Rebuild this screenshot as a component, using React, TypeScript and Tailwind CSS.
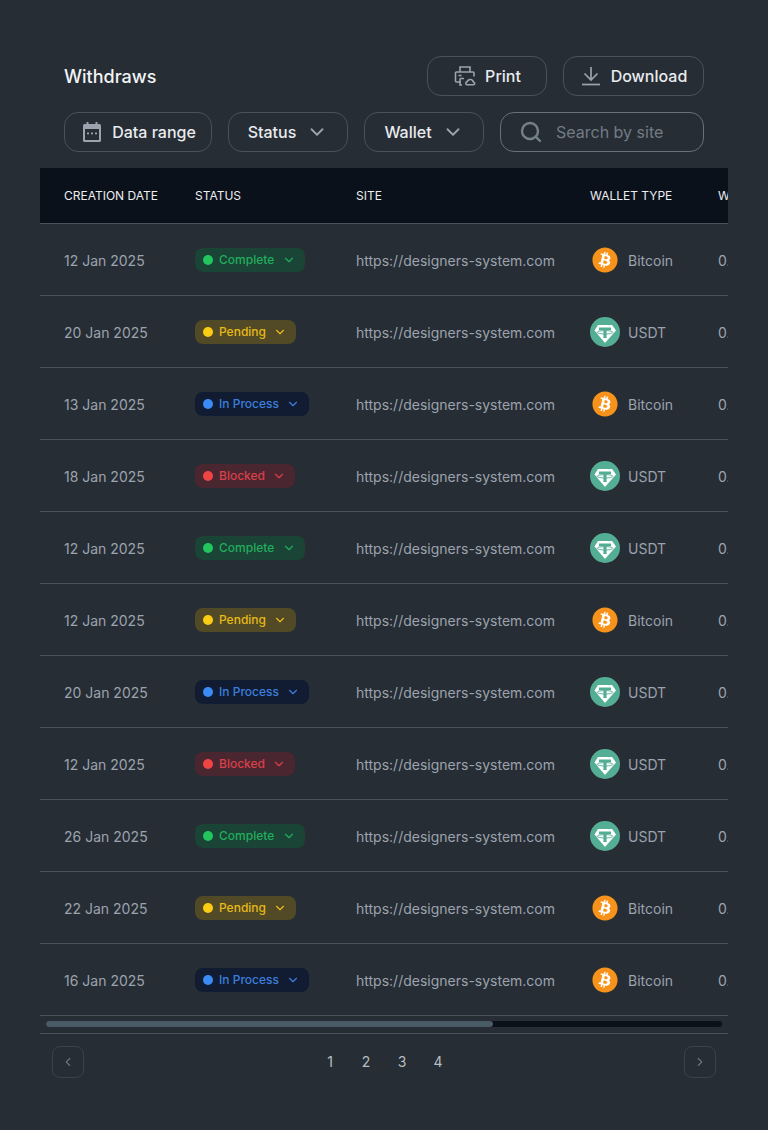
import { ChevronDown, ChevronLeft, ChevronRight, Search } from "lucide-react";
import { FaBitcoin } from "react-icons/fa";

type Status = "Complete" | "Pending" | "In Process" | "Blocked";
type Wallet = "Bitcoin" | "USDT";

const rows: { date: string; status: Status; wallet: Wallet }[] = [
  { date: "12 Jan 2025", status: "Complete", wallet: "Bitcoin" },
  { date: "20 Jan 2025", status: "Pending", wallet: "USDT" },
  { date: "13 Jan 2025", status: "In Process", wallet: "Bitcoin" },
  { date: "18 Jan 2025", status: "Blocked", wallet: "USDT" },
  { date: "12 Jan 2025", status: "Complete", wallet: "USDT" },
  { date: "12 Jan 2025", status: "Pending", wallet: "Bitcoin" },
  { date: "20 Jan 2025", status: "In Process", wallet: "USDT" },
  { date: "12 Jan 2025", status: "Blocked", wallet: "USDT" },
  { date: "26 Jan 2025", status: "Complete", wallet: "USDT" },
  { date: "22 Jan 2025", status: "Pending", wallet: "Bitcoin" },
  { date: "16 Jan 2025", status: "In Process", wallet: "Bitcoin" },
];

const statusStyles: Record<Status, { pill: string; dot: string; text: string }> = {
  Complete: { pill: "bg-[#1a4436] w-[110px]", dot: "bg-[#22c55e]", text: "text-[#22ad5c]" },
  Pending: { pill: "bg-[#524926] w-[101px]", dot: "bg-[#facc15]", text: "text-[#e6bb18]" },
  "In Process": { pill: "bg-[#111c33] w-[114px]", dot: "bg-[#3b8bf6]", text: "text-[#3b7fdc]" },
  Blocked: { pill: "bg-[#4a2630] w-[100px]", dot: "bg-[#ef4444]", text: "text-[#d8404a]" },
};

function CalendarIcon() {
  return (
    <svg width="20" height="22" viewBox="0 0 20 22" fill="none">
      <rect x="1" y="3" width="18" height="18" rx="1.500" fill="#9ca3af" />
      <rect x="3" y="8" width="14" height="11" fill="#262d34" />
      <rect x="4.500" y="1" width="2" height="3" fill="#9ca3af" />
      <rect x="13.500" y="1" width="2" height="3" fill="#9ca3af" />
      <rect x="5" y="11.500" width="2" height="1.800" fill="#9ca3af" />
      <rect x="9" y="11.500" width="2" height="1.800" fill="#9ca3af" />
      <rect x="13" y="11.500" width="2" height="1.800" fill="#9ca3af" />
    </svg>
  );
}

function PrintCloudIcon() {
  return (
    <svg width="22" height="22" viewBox="0 0 22 22" fill="none" stroke="#9ca3af" strokeWidth="1.600">
      <path d="M6 7V2h10v5" />
      <path d="M7 17H2.500a1 1 0 0 1-1-1V8a1 1 0 0 1 1-1h16.500a1 1 0 0 1 1 1v3.500" />
      <path d="M4.500 10.500h3" />
      <path d="M6 13.500h4M6 13.500V20h2" />
      <path d="M12.800 19.800h6.400a1.400 1.400 0 0 0 .2-2.800 3.200 3.200 0 0 0-6.200-.3 1.600 1.600 0 0 0-.4 3.100z" />
    </svg>
  );
}

function DownloadIcon() {
  return (
    <svg width="20" height="20" viewBox="0 0 20 20" fill="none" stroke="#9ca3af" strokeWidth="1.700">
      <path d="M10 1v12.500" />
      <path d="M3.500 7.500 10 14l6.500-6.500" />
      <path d="M1 18.500h18" />
    </svg>
  );
}

function BitcoinIcon() {
  return (
    <div className="relative h-[26px] w-[26px]">
      <div className="absolute inset-1 rounded-full bg-white" />
      <FaBitcoin size={26} className="relative text-[#f7931a]" />
    </div>
  );
}

function TetherIcon() {
  return (
    <svg width="30" height="30" viewBox="0 0 30 30">
      <circle cx="15" cy="15" r="15" fill="#53ae94" />
      <path d="M8 8h14l4 5.500L15 26 4.500 13.500z" fill="#fff" />
      <path d="M9 10.500h12v2.700h-4.400V21h-3.200v-7.800H9z" fill="#53ae94" />
      <ellipse cx="15" cy="15.300" rx="8" ry="1.700" fill="none" stroke="#53ae94" strokeWidth="0.900" />
    </svg>
  );
}

function OutlineButton({ className, children }: { className: string; children: React.ReactNode }) {
  return (
    <button className={`flex h-10 items-center rounded-[14px] border border-[#4a5159] text-base font-medium text-[#e9ebee] ${className}`}>
      {children}
    </button>
  );
}

export default function App() {
  return (
    <div
      className="h-[1130px] w-[768px] overflow-hidden bg-[#262d34] pt-14 pl-10"
      style={{ fontFamily: "Inter, sans-serif" }}
    >
      <div className="w-[688px]">
        <div className="flex items-center justify-between px-6">
          <h1 className="mt-0.5 text-lg font-medium text-[#f3f4f6]">Withdraws</h1>
          <div className="flex gap-4">
            <OutlineButton className="w-[120px] justify-center gap-[9px] pl-px">
              <PrintCloudIcon />
              Print
            </OutlineButton>
            <OutlineButton className="w-[141px] justify-center gap-2.5 pl-px">
              <DownloadIcon />
              Download
            </OutlineButton>
          </div>
        </div>

        <div className="mt-4 flex gap-4 px-6">
          <OutlineButton className="w-[148px] justify-center gap-2.5 pl-0.5">
            <CalendarIcon />
            Data range
          </OutlineButton>
          <OutlineButton className="w-[120px] justify-center gap-2.5">
            Status
            <ChevronDown size={22} strokeWidth={2} className="text-[#9ca3af]" />
          </OutlineButton>
          <OutlineButton className="w-[120px] justify-center gap-2.5">
            Wallet
            <ChevronDown size={22} strokeWidth={2} className="text-[#9ca3af]" />
          </OutlineButton>
          <div className="flex h-10 w-[204px] items-center gap-[13px] rounded-[14px] border border-[#68717a] pl-[18px]">
            <Search size={24} strokeWidth={2.400} className="text-[#74808a]" />
            <span className="text-base text-[#737b84]">Search by site</span>
          </div>
        </div>

        <div className="mt-4 overflow-hidden">
          <table className="w-[800px] table-fixed border-collapse text-left">
            <thead>
              <tr className="h-[55px] border-b border-[#4a5159] bg-[#0b111b] text-xs text-[#eceef0]">
                <th className="w-[131px] pt-0.5 pl-6 font-normal">CREATION DATE</th>
                <th className="w-[161px] pt-0.5 pl-6 font-normal">STATUS</th>
                <th className="w-[234px] pt-0.5 pl-6 font-normal">SITE</th>
                <th className="w-[128px] pt-0.5 pl-6 font-normal">WALLET TYPE</th>
                <th className="pt-0.5 pl-6 font-normal">WALLET ADDRESS</th>
              </tr>
            </thead>
            <tbody>
              {rows.map((row, i) => {
                const s = statusStyles[row.status];
                return (
                  <tr key={i} className="h-[72px] border-b border-[#4a5159] text-sm text-[#9ca3af]">
                    <td className="pt-1 pl-6 whitespace-nowrap">{row.date}</td>
                    <td className="pt-0.5 pl-6">
                      <div className={`flex h-6 items-center rounded-lg pl-2 ${s.pill}`}>
                        <span className={`h-2.5 w-2.5 shrink-0 rounded-full ${s.dot}`} />
                        <span className={`ml-[6px] text-xs font-medium whitespace-nowrap ${s.text}`}>
                          {row.status}
                        </span>
                        <ChevronDown size={14} className={`mr-[9px] ml-auto ${s.text}`} />
                      </div>
                    </td>
                    <td className="pt-1 pl-6 whitespace-nowrap">https://designers-system.com</td>
                    <td className="pt-0.5 pl-6">
                      <div className="flex items-center gap-2">
                        <div className="flex w-[30px] justify-center">
                          {row.wallet === "Bitcoin" ? <BitcoinIcon /> : <TetherIcon />}
                        </div>
                        <span className="mt-0.5">{row.wallet}</span>
                      </div>
                    </td>
                    <td className="pt-1 pl-6 whitespace-nowrap">0.00234 BTC</td>
                  </tr>
                );
              })}
            </tbody>
          </table>
        </div>

        <div className="flex h-[18px] items-center border-b border-[#4a5159] px-1.5">
          <div className="h-[6px] w-full rounded-full bg-[#0b111b]">
            <div className="h-[6px] w-[447px] rounded-full bg-[#4b5a67]" />
          </div>
        </div>

        <div className="mt-[12px] flex items-center justify-between px-3">
          <button className="flex h-8 w-8 items-center justify-center rounded-lg border border-[#3a424b] text-[#6b7280]">
            <ChevronLeft size={14} />
          </button>
          <div className="flex gap-[26px] text-sm text-[#b8bdc3]">
            <span className="w-2.5 text-center">1</span>
            <span className="w-2.5 text-center">2</span>
            <span className="w-2.5 text-center">3</span>
            <span className="w-2.5 text-center">4</span>
          </div>
          <button className="flex h-8 w-8 items-center justify-center rounded-lg border border-[#3a424b] text-[#6b7280]">
            <ChevronRight size={14} />
          </button>
        </div>
      </div>
    </div>
  );
}
